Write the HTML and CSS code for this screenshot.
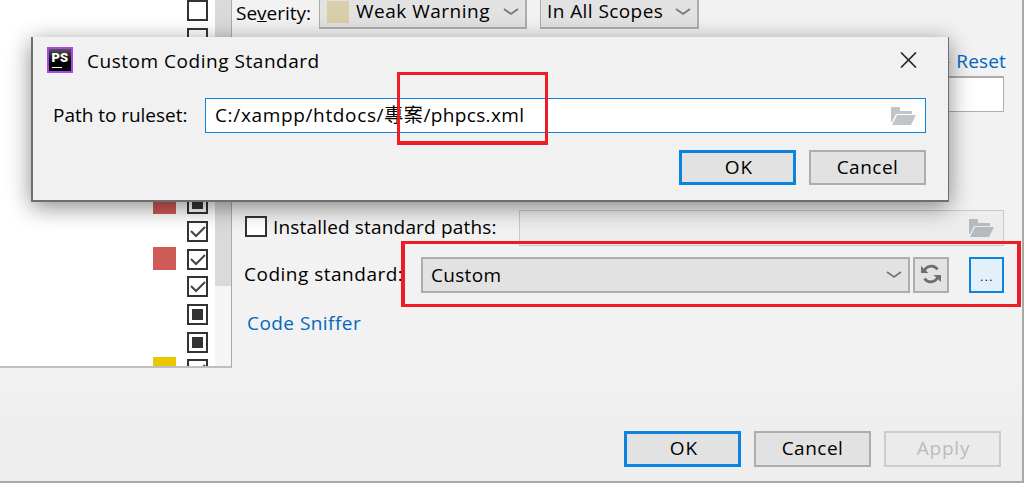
FILE: index.html
```html
<!DOCTYPE html>
<html lang="en">
<head>
<meta charset="utf-8">
<title>Custom Coding Standard</title>
<link rel="stylesheet" href="styles.css">
</head>
<body>
<svg class="defs" width="0" height="0">
  <symbol id="check" viewBox="0 0 21 21"><path d="M4 10l5 5 9-9" fill="none" stroke="#444" stroke-width="2"/></symbol>
  <symbol id="chevron" viewBox="0 0 16 8"><path d="M1 1l7 5 7-5" fill="none" stroke="currentColor" stroke-width="1.8"/></symbol>
  <symbol id="folder" viewBox="0 0 25 18"><path d="M0 0h9v4h12v3H5L1 15H0z M6 8h19l-5 10H1z" fill="currentColor"/></symbol>
</svg>
<div class="window">
  <div class="content">
    <div class="tree">
      <div class="rows">
        <div class="row"><i class="box"></i></div>
        <div class="row"><i class="box"></i></div>
        <div class="row"></div>
        <div class="row"></div>
        <div class="row"></div>
        <div class="row"></div>
        <div class="row"></div>
        <div class="row"><i class="swatch red"></i><i class="box partial"></i></div>
        <div class="row"><i class="box"><svg><use href="#check"/></svg></i></div>
        <div class="row"><i class="swatch red"></i><i class="box"><svg><use href="#check"/></svg></i></div>
        <div class="row"><i class="box"><svg><use href="#check"/></svg></i></div>
        <div class="row"><i class="box partial"></i></div>
        <div class="row"><i class="box partial"></i></div>
        <div class="row"><i class="swatch yellow"></i><i class="box"><svg><use href="#check"/></svg></i></div>
      </div>
      <div class="scrollbar"><div class="thumb"></div></div>
    </div>
    <div class="panel">
      <div class="severity">
        <span class="t-severity">Se<u>v</u>erity:</span>
        <div class="combo level"><i class="weak"></i><span class="t-weak">Weak Warning</span><svg class="chev"><use href="#chevron"/></svg></div>
        <div class="combo scope"><span class="t-scope">In All Scopes</span><svg class="chev"><use href="#chevron"/></svg></div>
      </div>
      <div class="reset"><i class="rule"></i><a class="t-reset">Reset</a></div>
      <div class="field options"></div>
      <div class="paths">
        <i class="box big"></i><span class="t-installed">Installed standard paths:</span>
        <div class="field disabled"><svg class="folder"><use href="#folder"/></svg></div>
      </div>
      <div class="standard">
        <span class="t-coding">Coding standard:</span>
        <div class="combo custom"><span class="t-custom">Custom</span><svg class="chev"><use href="#chevron"/></svg></div>
        <div class="tool"><svg class="refresh" viewBox="0 0 20 20"><path d="M3 8A7.500 7.500 0 0 1 16.500 5.500M17 12A7.500 7.500 0 0 1 3.500 14.500" fill="none" stroke="#6e6e6e" stroke-width="2.800"/><path d="M0 2v7h7.500zM20 18v-7h-7.500z" fill="#6e6e6e"/></svg></div>
        <div class="tool more">...</div>
      </div>
      <a class="link t-sniffer">Code Sniffer</a>
    </div>
  </div>
  <div class="footer">
    <div class="button primary t-ok">OK</div>
    <div class="button t-cancel">Cancel</div>
    <div class="button off t-apply">Apply</div>
  </div>
</div>

<div class="dialog">
  <div class="titlebar">
    <svg class="logo" viewBox="0 0 26 26"><defs><linearGradient id="g" x2="0" y2="1"><stop stop-color="#555"/><stop offset=".6" stop-color="#000"/></linearGradient></defs><path fill="#b043f0" d="M0 0h26v26H0z"/><path fill="url(#g)" d="M2 2h22v22H2z"/><text x="4.500" y="14.500" textLength="16.500" lengthAdjust="spacingAndGlyphs">PS</text><path fill="#fff" d="M5 20h10v1H5z"/></svg>
    <span class="t-title">Custom Coding Standard</span>
    <svg class="close" viewBox="0 0 17 16"><path d="M1 .5l15 15M16 .5l-15 15" stroke="#222" stroke-width="1.600"/></svg>
  </div>
  <div class="ruleset">
    <span class="t-path">Path to ruleset:</span>
    <div class="input"><span class="t-value">C:/xampp/htdocs/</span><span class="cjk">專案</span><span class="t-file">/phpcs.xml</span><svg class="folder"><use href="#folder"/></svg></div>
  </div>
  <div class="actions">
    <div class="button primary t-ok">OK</div>
    <div class="button t-cancel">Cancel</div>
  </div>
</div>
<div class="mark mark-file"></div>
<div class="mark mark-standard"></div>
</body>
</html>
```
FILE: styles.css
```css
* { box-sizing: border-box; }
body { margin: 0; width: 1024px; height: 483px; overflow: hidden; position: relative; background: #f1f1f1; color: #000; font: 19px/26px "Open Sans", "Noto Sans CJK TC", sans-serif; }
span, a, .button { white-space: nowrap; }
svg { display: block; flex: none; }
.defs { position: absolute; }
.window { height: 483px; border: solid #a9a9a9; border-width: 0 2px 2px 0; display: flex; flex-direction: column; background: linear-gradient(#f2f2f2 370px, #eee 430px); }
.content { display: flex; height: 368px; }
.tree { width: 232px; height: 368px; display: flex; background: #fff; border-right: 1px solid #aaa; border-bottom: 2px solid #bfbfbf; overflow: hidden; flex: none; }
.rows { width: 215px; padding-right: 7px; }
.row { height: 27.65px; display: flex; justify-content: flex-end; gap: 11px; }
.box { width: 21px; height: 21px; border: 2px solid #333; background: #fff; flex: none; }
.box svg { width: 21px; height: 21px; margin: -2px; }
.partial { padding: 3px; }
.partial::before { content: ""; display: block; width: 11px; height: 11px; background: #333; }
.swatch { width: 23px; height: 23px; margin-top: -2px; }
.red { background: #cf5b56; }
.yellow { background: #ebc700; }
.scrollbar { width: 16px; background: #f5f5f5; }
.thumb { height: 286px; background: #dadada; }
.panel { flex: 1; display: flex; flex-direction: column; }
.severity { display: flex; height: 29px; padding-left: 4px; }
.t-severity { width: 83px; }
.combo { display: flex; align-items: center; background: #e2e2e2; border: 2px solid #adadad; border-left-width: 1px; }
.combo .chev { margin-left: auto; }
.chev { width: 16px; height: 8px; color: #777; }
.level, .scope { height: 35px; margin-top: -6px; padding-right: 6px; }
.level { width: 208px; padding-left: 7px; }
.scope { width: 159px; margin-left: 13px; padding-left: 6px; }
.t-weak { letter-spacing: .5px; padding-bottom: 1px; }
.t-scope { letter-spacing: .42px; padding-bottom: 1px; }
.weak { width: 22px; height: 22px; background: #d8ceaa; margin-right: 7px; }
.reset { margin-top: 19px; height: 28px; display: flex; align-items: center; padding-right: 16px; color: #0067c0; }
.t-reset { padding-bottom: 2px; letter-spacing: .15px; }
.rule { flex: 1; height: 1px; background: #c8c8c8; margin-right: 5px; }
.field { border: 1px solid #adadad; height: 36px; display: flex; align-items: center; justify-content: flex-end; }
.options { width: 770px; margin-left: 2px; border-width: 2px 1px 1px; background: #fff; }
.paths { display: flex; align-items: center; margin: 98px 0 0 13px; }
.big { width: 22px; margin: 0 6px 3px 0; }
.t-installed { width: 246px; letter-spacing: .17px; padding-bottom: 2px; }
.disabled { width: 485px; border: 1px solid #c9c9c9; background: #ededed; padding-right: 9px; }
.folder { width: 25px; height: 18px; color: #b4bbc0; }
.standard { display: flex; align-items: center; margin: 11px 0 0 12px; }
.t-coding { width: 177px; letter-spacing: .5px; padding-bottom: 2px; }
.t-custom { letter-spacing: .3px; }
.custom { width: 489px; height: 36px; padding: 0 6px 0 8px; border-left-width: 2px; }
.tool { width: 36px; height: 36px; margin-left: 3px; border: 2px solid #adadad; background: #e2e2e2; display: flex; align-items: center; justify-content: center; }
.refresh { width: 20px; height: 20px; margin-bottom: 3px; }
.more { margin-left: 20px; width: 35px; border: 2px solid #0a84df; background: #e3f0fa; line-height: 32px; font-size: 17px; font-weight: 300; letter-spacing: .4px; }
.link { margin: 17px 0 0 15px; color: #0067c0; letter-spacing: .45px; }
.footer { display: flex; justify-content: flex-end; gap: 13px; margin-top: 63px; padding-right: 21px; }
.button { width: 117px; height: 36px; border: 2px solid #adadad; background: #e2e2e2; text-align: center; line-height: 31px; }
.t-ok { letter-spacing: 1px; padding-left: 3px; }
.t-cancel { letter-spacing: .5px; }
.t-apply { letter-spacing: .8px; padding-left: 2px; }
.primary { border: 3px solid #0a84df; line-height: 29px; }
.off { border-color: #ccc; background: #ebebeb; color: #bbb; }
.dialog { position: absolute; left: 31px; top: 37px; width: 918px; height: 165px; background: #f1f1f1; border: solid #6e6e6e; border-width: 0 1px 2px 2px; box-shadow: 0 5px 22px rgba(0,0,0,.46); }
.titlebar { height: 46px; padding: 0 31px 0 14px; display: flex; align-items: center; }
.t-title { letter-spacing: .53px; padding-top: 2px; }
.logo { width: 26px; height: 26px; margin-right: 14px; }
.logo text { font: 900 12.5px Roboto, sans-serif; fill: #fff; }
.close { width: 17px; height: 16px; margin-left: auto; }
.ruleset { display: flex; align-items: center; margin: 15px 0 0 20px; height: 35px; }
.t-path { width: 152px; padding-bottom: 2px; letter-spacing: -.03px; }
.input { width: 721px; height: 35px; border: 1px solid #0a84df; background: #fff; padding: 0 9px; display: flex; align-items: center; }
.input span { padding-bottom: 2px; }
.t-value { letter-spacing: .65px; }
.cjk { letter-spacing: .6px; }
.t-file { letter-spacing: .35px; }
.input .folder { margin-left: auto; color: #bfc5c9; }
.actions { display: flex; gap: 13px; justify-content: flex-end; margin-top: 17px; padding-right: 22px; }
.actions .button { height: 35px; }
.mark { position: absolute; border: 3px solid #ee1c25; }
.mark-file { left: 397px; top: 72px; width: 151px; height: 73px; border-bottom-width: 4px; }
.mark-standard { left: 401px; top: 241px; width: 620px; height: 66px; border-left-width: 4px; border-right-width: 4px; }
```
